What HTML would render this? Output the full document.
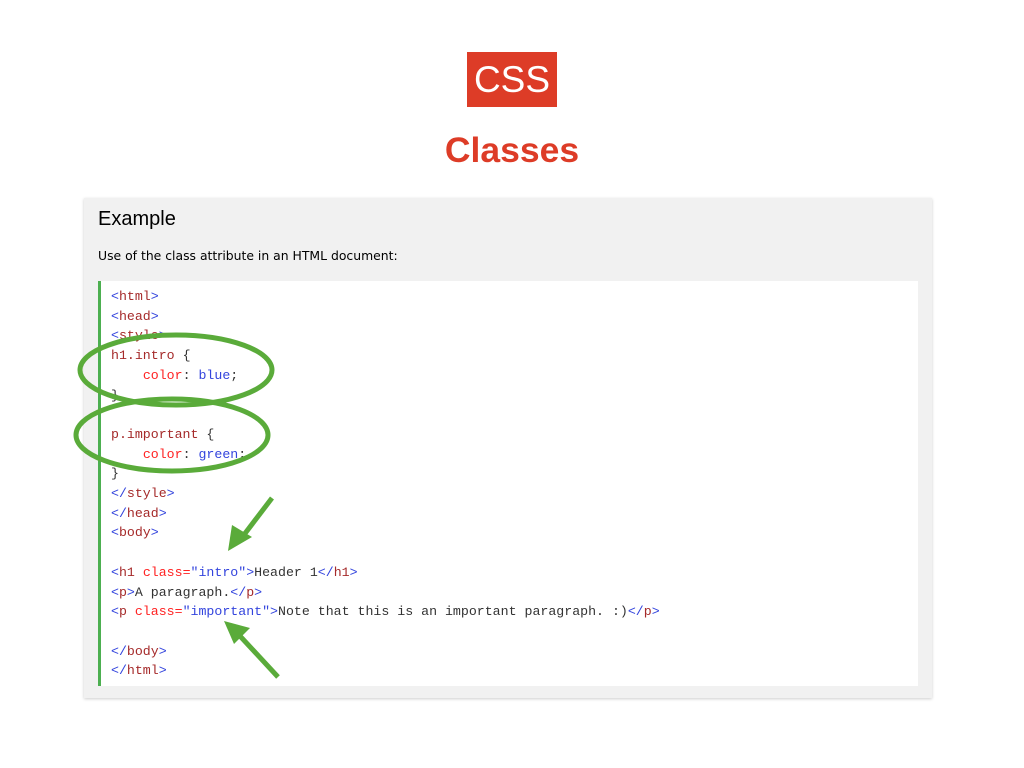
<!DOCTYPE html>
<html><head><style>
body{margin:0;width:1024px;height:768px;background:#fff;position:relative;font-family:"Liberation Sans",sans-serif;overflow:hidden}
.logo{position:absolute;left:467px;top:52px;width:90px;height:55px;background:#dd3c27;color:#fff;font-size:37px;line-height:55px;text-align:center}
.title{position:absolute;left:0;width:1024px;top:128px;text-align:center;color:#dd3c27;font-weight:bold;font-size:35.5px;line-height:44px}
.box{position:absolute;left:84px;top:198px;width:848px;height:500px;background:#f1f1f1;box-shadow:0 1px 3px rgba(0,0,0,.2)}
.box h2{position:absolute;left:14px;top:10px;margin:0;font-weight:normal;font-size:20px;color:#000}
.box p{position:absolute;left:14px;top:50px;margin:0;font-family:"DejaVu Sans",sans-serif;font-size:12.4px;color:#000}
.code{position:absolute;left:14px;top:83px;width:817px;height:405px;background:#fff;border-left:3px solid #4caf50}
pre{margin:0;position:absolute;left:10px;top:6px;font-family:"Liberation Mono",monospace;font-size:13.25px;line-height:19.7px;color:#333}
.b{color:#3344dd}.t{color:#a52a2a}.a{color:#f22}.v{color:#3344dd}
svg{position:absolute;left:0;top:0}
</style></head><body>
<div class="logo">CSS</div>
<div class="title">Classes</div>
<div class="box"><h2>Example</h2><p>Use of the class attribute in an HTML document:</p>
<div class="code"><pre><span class="b">&lt;</span><span class="t">html</span><span class="b">&gt;</span>
<span class="b">&lt;</span><span class="t">head</span><span class="b">&gt;</span>
<span class="b">&lt;</span><span class="t">style</span><span class="b">&gt;</span>
<span class="t">h1.intro</span> {
    <span class="a">color</span>: <span class="v">blue</span>;
}

<span class="t">p.important</span> {
    <span class="a">color</span>: <span class="v">green</span>;
}
<span class="b">&lt;/</span><span class="t">style</span><span class="b">&gt;</span>
<span class="b">&lt;/</span><span class="t">head</span><span class="b">&gt;</span>
<span class="b">&lt;</span><span class="t">body</span><span class="b">&gt;</span>

<span class="b">&lt;</span><span class="t">h1</span> <span class="a">class=</span><span class="v">"intro"</span><span class="b">&gt;</span>Header 1<span class="b">&lt;/</span><span class="t">h1</span><span class="b">&gt;</span>
<span class="b">&lt;</span><span class="t">p</span><span class="b">&gt;</span>A paragraph.<span class="b">&lt;/</span><span class="t">p</span><span class="b">&gt;</span>
<span class="b">&lt;</span><span class="t">p</span> <span class="a">class=</span><span class="v">"important"</span><span class="b">&gt;</span>Note that this is an important paragraph. :)<span class="b">&lt;/</span><span class="t">p</span><span class="b">&gt;</span>

<span class="b">&lt;/</span><span class="t">body</span><span class="b">&gt;</span>
<span class="b">&lt;/</span><span class="t">html</span><span class="b">&gt;</span></pre></div></div>
<svg width="1024" height="768">
<g fill="none" stroke="#5aab3a" stroke-width="5">
<ellipse cx="176" cy="370" rx="96" ry="35"/>
<ellipse cx="172" cy="435" rx="96" ry="36"/>
<line x1="272" y1="498" x2="240" y2="540"/>
<line x1="278" y1="677" x2="240" y2="636"/>
</g>
<polygon points="228,551 232,525 252,537" fill="#5aab3a"/>
<polygon points="224,621 250,628 234,644" fill="#5aab3a"/>
</svg>
</body></html>
